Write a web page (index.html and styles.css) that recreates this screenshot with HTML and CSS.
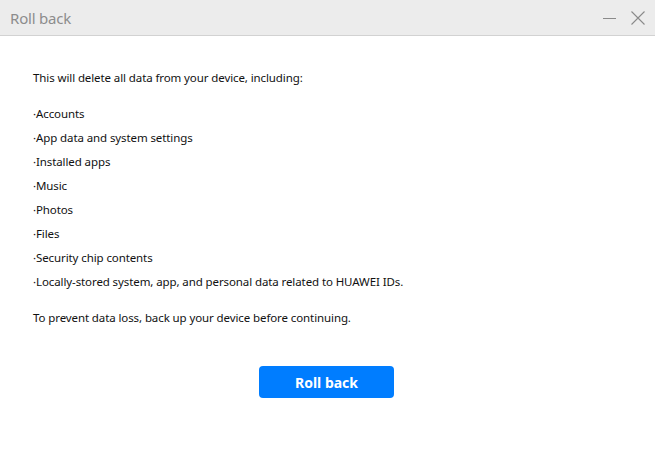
FILE: index.html
```html
<!DOCTYPE html>
<html lang="en">
<head>
    <meta charset="UTF-8">
    <meta name="viewport" content="width=device-width, initial-scale=1.0">
    <title>Roll back</title>
    <link rel="stylesheet" href="styles.css">
</head>
<body>
    <div class="window">
        <div class="title-bar">
            <span class="title">Roll back</span>
            <div class="window-controls">
                <button class="control" aria-label="Minimize">
                    <svg width="14" height="14" viewBox="0 0 14 14"><line x1="0" y1="7.5" x2="13" y2="7.5" stroke="#8a8a8a" stroke-width="1"/></svg>
                </button>
                <button class="control" aria-label="Close">
                    <svg width="14" height="14" viewBox="0 0 14 14"><path d="M0.5 0.5 L13.5 13.5 M13.5 0.5 L0.5 13.5" stroke="#8a8a8a" stroke-width="1.1" fill="none"/></svg>
                </button>
            </div>
        </div>

        <div class="content">
            <p class="line">This will delete all data from your device, including:</p>
            <ul class="data-list">
                <li>·Accounts</li>
                <li>·App data and system settings</li>
                <li>·Installed apps</li>
                <li>·Music</li>
                <li>·Photos</li>
                <li>·Files</li>
                <li>·Security chip contents</li>
                <li>·Locally-stored system, app, and personal data related to HUAWEI IDs.</li>
            </ul>
            <p class="line">To prevent data loss, back up your device before continuing.</p>

            <div class="actions">
                <button class="primary-button">Roll back</button>
            </div>
        </div>
    </div>
</body>
</html>
```

FILE: styles.css
```css
body {
    margin: 0;
    padding: 0;
    font-family: "Noto Sans", "Open Sans", Arial, sans-serif;
    background-color: #ffffff;
    color: #111111;
}

.window {
    width: 655px;
    height: 449px;
    display: flex;
    flex-direction: column;
}

/* Верхняя панель окна */
.title-bar {
    height: 35px;
    background-color: #ececec;
    border-bottom: 1px solid #d2d2d2;
    display: flex;
    align-items: center;
    justify-content: space-between;
    padding: 0 10px 0 10px;
}

.title {
    font-size: 15px;
    color: #8c8c8c;
    letter-spacing: -0.2px;
}

.window-controls {
    display: flex;
    align-items: center;
    gap: 14px;
    padding-top: 1px;
}

.control {
    border: none;
    background: none;
    padding: 0;
    width: 14px;
    height: 14px;
    display: flex;
    cursor: pointer;
}

.content {
    padding: 30px 35px 0 33px;
    font-size: 11.5px;
    letter-spacing: -0.1px;
}

.line {
    margin: 0;
    line-height: 24px;
}

.data-list {
    list-style: none;
    margin: 12px 0;
    padding: 0;
}

.data-list li {
    line-height: 24px;
}

.actions {
    display: flex;
    justify-content: center;
    padding-top: 36px;
}

.primary-button {
    width: 135px;
    height: 32px;
    border: none;
    border-radius: 4px;
    background-color: #007dff;
    color: white;
    font-family: "Noto Sans", Arial, sans-serif;
    font-size: 14px;
    font-weight: bold;
    cursor: pointer;
}
```
